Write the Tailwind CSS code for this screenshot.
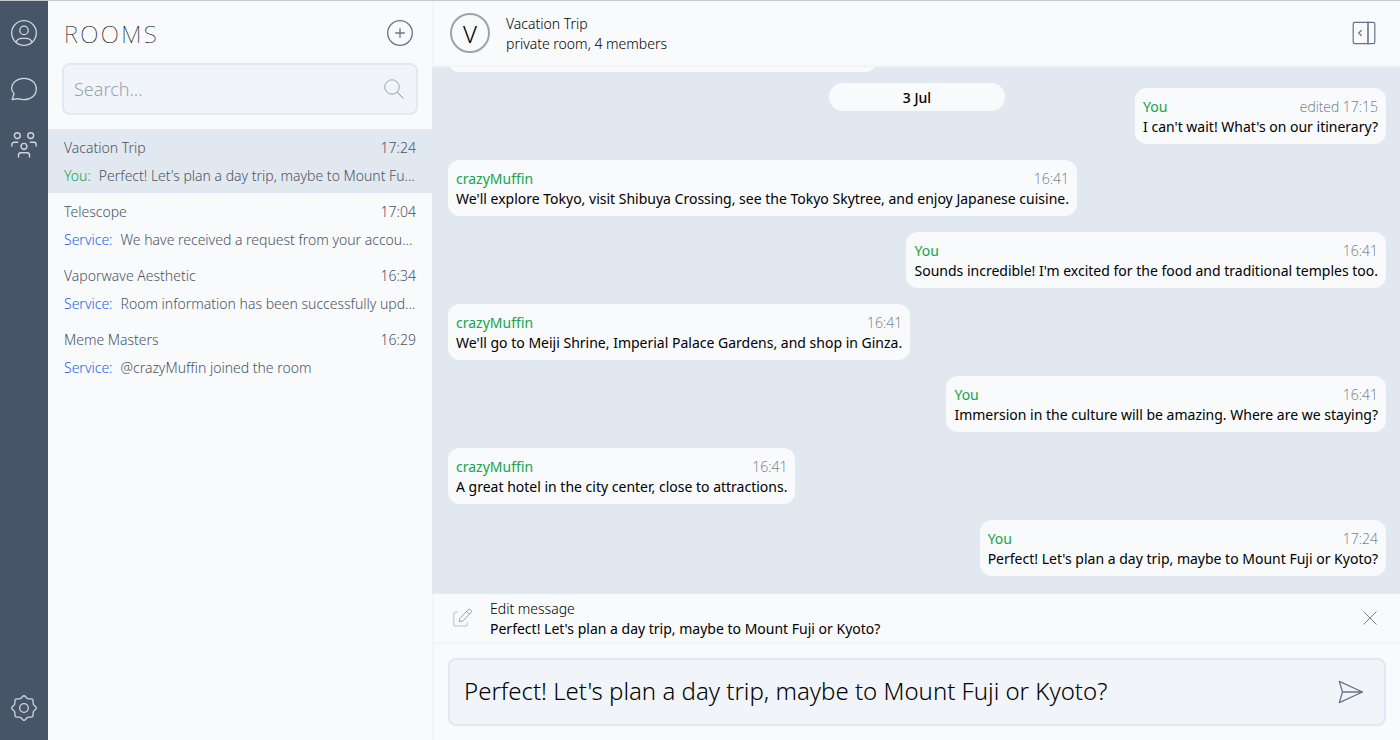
<!DOCTYPE html>
<html lang="en">
<head>
<meta charset="utf-8">
<meta name="viewport" content="width=device-width, initial-scale=1">
<title>Rooms</title>
<script src="https://cdn.jsdelivr.net/npm/@tailwindcss/browser@4"></script>
</head>
<body class="font-['Noto_Sans',sans-serif] text-sm text-black">
<div class="flex h-screen border-t border-[#c8c8c8] bg-[#f8fafc]">

  <nav aria-label="Main" class="flex w-12 shrink-0 flex-col items-center gap-6 bg-[#475569] pt-4 pb-4 text-[#d1d5db]">
    <button type="button" aria-label="Profile" class="size-8">
      <svg class="size-8" viewBox="0 0 32 32" fill="none" stroke="currentColor" stroke-width="1.3" stroke-linecap="round" stroke-linejoin="round"><circle cx="16" cy="16" r="12.3"/><circle cx="16" cy="13.4" r="4.2"/><path d="M8.3 24.8C9.2 22.2 11.3 21.3 14 21.3h4c2.7 0 4.8.9 5.7 3.5"/></svg>
    </button>
    <button type="button" aria-label="Chats" class="size-8">
      <svg class="size-8" viewBox="0 0 32 32" fill="none" stroke="currentColor" stroke-width="1.3" stroke-linecap="round" stroke-linejoin="round"><path d="M4.2 26.5L6 20.7C4.5 19 3.7 17.4 3.7 15.6C3.7 9.7 9.2 5.3 16 5.3S28.3 9.7 28.3 16S22.8 26.7 16 26.7C13.8 26.7 11.8 26.3 10.2 25.6Z"/></svg>
    </button>
    <button type="button" aria-label="Contacts" class="size-8">
      <svg class="size-8" viewBox="0 0 32 32" fill="none" stroke="currentColor" stroke-width="1.4" stroke-linecap="round" stroke-linejoin="round"><circle cx="9.3" cy="6.6" r="2.9"/><circle cx="22.7" cy="6.6" r="2.9"/><circle cx="16" cy="17.3" r="2.9"/><path d="M3.8 17v-1.300a2.400 2.400 0 0 1 2.400-2.400h3.500M28.200 17v-1.300a2.400 2.400 0 0 0-2.400-2.400h-3.500M10.500 28v-1.800a2.400 2.400 0 0 1 2.400-2.400h6.200a2.400 2.400 0 0 1 2.400 2.400v1.800"/></svg>
    </button>
    <button type="button" aria-label="Settings" class="mt-auto size-8">
      <svg class="size-8" viewBox="0 0 32 32" fill="none" stroke="currentColor" stroke-width="1.3" stroke-linejoin="round"><circle cx="16" cy="16" r="4.3"/><path d="M14.6 4.5Q16 3 17.4 4.5L18.8 6Q19.7 6.9 20.9 6.9H23.3Q25.1 6.9 25.1 8.7V11.1Q25.1 12.3 26 13.2L27.5 14.6Q29 16 27.5 17.4L26 18.8Q25.1 19.700 25.100 20.900V23.300Q25.100 25.100 23.300 25.100H20.900Q19.700 25.100 18.800 26L17.400 27.500Q16 29 14.600 27.500L13.200 26Q12.300 25.100 11.100 25.100H8.700Q6.900 25.100 6.900 23.300V20.900Q6.900 19.700 6 18.800L4.500 17.400Q3 16 4.500 14.600L6 13.200Q6.900 12.300 6.900 11.100V8.700Q6.900 6.900 8.700 6.900H11.100Q12.300 6.900 13.200 6Z"/></svg>
    </button>
  </nav>

  <aside class="flex w-96 shrink-0 flex-col">
    <header class="flex items-center justify-between px-4 pt-4">
      <h1 class="pt-0.5 text-2xl leading-[30px] font-thin tracking-widest">ROOMS</h1>
      <button type="button" aria-label="New room" class="size-8 text-[#64748b]">
        <svg class="size-8" viewBox="0 0 32 32" fill="none" stroke="currentColor" stroke-width="1.3" stroke-linecap="round"><circle cx="16" cy="16" r="12.3"/><path d="M16 11.700v8.600M11.700 16h8.600"/></svg>
      </button>
    </header>
    <div class="p-3.5">
      <label class="flex h-13 items-center rounded-lg border-2 border-[#e2e8f0] bg-[#f1f5f9] px-2.5">
        <input type="search" aria-label="Search rooms" placeholder="Search..." class="min-w-0 flex-1 bg-transparent text-lg font-light outline-none placeholder:text-[#9ca3af]">
        <svg class="size-6 text-[#94a3b8]" viewBox="0 0 24 24" fill="none" stroke="currentColor" stroke-width="1"><circle cx="10" cy="10" r="7.2"/><path d="M15.3 15.3L21.5 21.5" stroke="#64748b" stroke-width="0.8"/></svg>
      </label>
    </div>
    <ul class="font-light text-[#4b5563]">
      <li><a href="#" class="flex h-16 flex-col justify-between bg-[#e2e8f0] px-4 pt-[9px] pb-[7px]">
        <span class="flex justify-between"><span>Vacation Trip</span><time>17:24</time></span>
        <span class="truncate"><span class="mr-2 text-[#16a34a]">You:</span>Perfect! Let's plan a day trip, maybe to Mount Fuji or Kyoto?</span>
      </a></li>
      <li><a href="#" class="flex h-16 flex-col justify-between px-4 pt-[9px] pb-[7px]">
        <span class="flex justify-between"><span>Telescope</span><time>17:04</time></span>
        <span class="truncate"><span class="mr-2 text-[#2563eb]">Service:</span>We have received a request from your account.</span>
      </a></li>
      <li><a href="#" class="flex h-16 flex-col justify-between px-4 pt-[9px] pb-[7px]">
        <span class="flex justify-between"><span>Vaporwave Aesthetic</span><time>16:34</time></span>
        <span class="truncate"><span class="mr-2 text-[#2563eb]">Service:</span>Room information has been successfully updated</span>
      </a></li>
      <li><a href="#" class="flex h-16 flex-col justify-between px-4 pt-[9px] pb-[7px]">
        <span class="flex justify-between"><span>Meme Masters</span><time>16:29</time></span>
        <span class="truncate"><span class="mr-2 text-[#2563eb]">Service:</span>@crazyMuffin joined the room</span>
      </a></li>
    </ul>
  </aside>

  <main class="flex min-w-0 flex-1 flex-col">
    <header class="flex h-[66px] shrink-0 items-center gap-4 border-b-2 border-l-2 border-[#f1f5f9] pr-5 pl-4">
      <span class="flex size-10 items-center justify-center rounded-full border-2 border-[#9ca3af] pt-0.5 text-2xl font-light">V</span>
      <div class="flex-1 pt-0.5 font-light">
        <h2>Vacation Trip</h2>
        <p>private room, 4 members</p>
      </div>
      <button type="button" aria-label="Toggle side panel" class="size-8 text-[#64748b]">
        <svg class="size-8" viewBox="0 0 32 32" fill="none" stroke="currentColor" stroke-width="1.2" stroke-linecap="round" stroke-linejoin="round"><rect x="5.2" y="5.3" width="21.600" height="21.400" rx="1.600"/><path d="M20 5.300v21.400" stroke-width="1.600"/><path d="M13.200 13.500L10.700 16l2.500 2.500"/></svg>
      </button>
    </header>

    <section aria-label="Messages" class="relative flex min-h-0 flex-1 flex-col items-start justify-end gap-4 overflow-hidden bg-[#e2e8f0] pr-3.5 pb-[18px] pl-4">
      <time class="absolute right-0 left-0.5 top-4 mx-auto w-44 rounded-full bg-[#f8fafc] pt-[5px] pb-[3px] text-center font-medium">3 Jul</time>
      <div class="h-14 w-[429px] shrink-0 rounded-xl bg-[#f8fafc]"></div>
      <article class="shrink-0 self-end rounded-xl bg-[#f8fafc] px-2 pt-[9px] pb-[7px]">
        <div class="flex justify-between gap-4"><span class="text-[#16a34a]">You</span><time class="font-extralight text-[#4b5563]">edited 17:15</time></div>
        <p>I can't wait! What's on our itinerary?</p>
      </article>
      <article class="shrink-0 rounded-xl bg-[#f8fafc] px-2 pt-[9px] pb-[7px]">
        <div class="flex justify-between gap-4"><span class="text-[#16a34a]">crazyMuffin</span><time class="font-extralight text-[#4b5563]">16:41</time></div>
        <p>We'll explore Tokyo, visit Shibuya Crossing, see the Tokyo Skytree, and enjoy Japanese cuisine.</p>
      </article>
      <article class="shrink-0 self-end rounded-xl bg-[#f8fafc] px-2 pt-[9px] pb-[7px]">
        <div class="flex justify-between gap-4"><span class="text-[#16a34a]">You</span><time class="font-extralight text-[#4b5563]">16:41</time></div>
        <p>Sounds incredible! I'm excited for the food and traditional temples too.</p>
      </article>
      <article class="shrink-0 rounded-xl bg-[#f8fafc] px-2 pt-[9px] pb-[7px]">
        <div class="flex justify-between gap-4"><span class="text-[#16a34a]">crazyMuffin</span><time class="font-extralight text-[#4b5563]">16:41</time></div>
        <p>We'll go to Meiji Shrine, Imperial Palace Gardens, and shop in Ginza.</p>
      </article>
      <article class="shrink-0 self-end rounded-xl bg-[#f8fafc] px-2 pt-[9px] pb-[7px]">
        <div class="flex justify-between gap-4"><span class="text-[#16a34a]">You</span><time class="font-extralight text-[#4b5563]">16:41</time></div>
        <p>Immersion in the culture will be amazing. Where are we staying?</p>
      </article>
      <article class="shrink-0 rounded-xl bg-[#f8fafc] px-2 pt-[9px] pb-[7px]">
        <div class="flex justify-between gap-4"><span class="text-[#16a34a]">crazyMuffin</span><time class="font-extralight text-[#4b5563]">16:41</time></div>
        <p>A great hotel in the city center, close to attractions.</p>
      </article>
      <article class="shrink-0 self-end rounded-xl bg-[#f8fafc] px-2 pt-[9px] pb-[7px]">
        <div class="flex justify-between gap-4"><span class="text-[#16a34a]">You</span><time class="font-extralight text-[#4b5563]">17:24</time></div>
        <p>Perfect! Let's plan a day trip, maybe to Mount Fuji or Kyoto?</p>
      </article>
    </section>

    <div class="flex h-[50px] shrink-0 items-center gap-3.5 border-b-2 border-l-2 border-[#f1f5f9] px-3.5">
      <svg class="size-7 text-[#cbd5e1]" viewBox="0 0 28 28" fill="none" stroke="currentColor" stroke-linecap="round" stroke-linejoin="round"><path d="M9 8.200H8a2.300 2.300 0 0 0-2.300 2.300v9.200A2.300 2.300 0 0 0 8 22h9a2.300 2.300 0 0 0 2.300-2.300v-1" stroke-width="1.600"/><path d="M12.200 14.100l7.900-8.300a1.700 1.700 0 0 1 2.400 0l.4.400a1.700 1.700 0 0 1 0 2.400L15 16.800l-3.500.9zM18.600 7.300l2.800 2.800" stroke="#94a3b8"/></svg>
      <div class="min-w-0 flex-1 pt-0.5">
        <h3 class="font-light">Edit message</h3>
        <p class="truncate">Perfect! Let's plan a day trip, maybe to Mount Fuji or Kyoto?</p>
      </div>
      <button type="button" aria-label="Cancel editing" class="size-8 text-[#64748b]">
        <svg class="size-8" viewBox="0 0 32 32" fill="none" stroke="currentColor" stroke-width="0.9"><path d="M9.500 9.500l13 13M22.500 9.500l-13 13"/></svg>
      </button>
    </div>

    <form class="shrink-0 border-l-2 border-[#f1f5f9] p-3.5">
      <div class="flex h-17 items-center rounded-lg border-2 border-[#e2e8f0] bg-[#f1f5f9] pr-4 pl-3.5">
        <input type="text" aria-label="Message" value="Perfect! Let's plan a day trip, maybe to Mount Fuji or Kyoto?" class="min-w-0 flex-1 bg-transparent pb-0.5 text-2xl font-light outline-none">
        <button type="button" aria-label="Send" class="size-8 text-[#64748b]">
          <svg class="size-8" viewBox="0 0 32 32" fill="none" stroke="currentColor" stroke-width="1.3" stroke-linecap="round" stroke-linejoin="round"><path d="M3.300 5.400L26.500 16L3.300 26.600L6.500 16ZM6.500 16h20"/></svg>
        </button>
      </div>
    </form>
  </main>
</div>
</body>
</html>
